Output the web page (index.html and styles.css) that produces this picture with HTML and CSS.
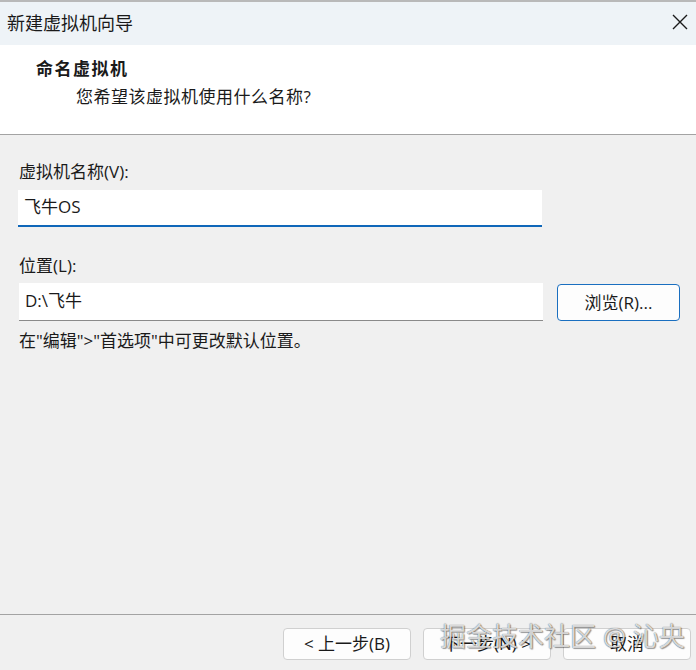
FILE: index.html
```html
<!DOCTYPE html>
<html lang="zh-CN">
<head>
    <meta charset="UTF-8">
    <meta name="viewport" content="width=device-width, initial-scale=1.0">
    <title>新建虚拟机向导</title>
    <link rel="stylesheet" href="styles.css">
</head>
<body>
    <div class="window">
        <div class="titlebar">
            <span class="title">新建虚拟机向导</span>
            <svg class="close" width="16" height="16" viewBox="0 0 16 16">
                <path d="M1 1 L15 15 M15 1 L1 15" stroke="#1a1a1a" stroke-width="1.4" fill="none"/>
            </svg>
        </div>

        <div class="header">
            <div class="heading">命名虚拟机</div>
            <div class="subheading">您希望该虚拟机使用什么名称?</div>
        </div>

        <div class="content">
            <label class="label">虚拟机名称(V):</label>
            <div class="field active">飞牛OS</div>

            <label class="label second">位置(L):</label>
            <div class="row">
                <div class="field">D:\飞牛</div>
                <button class="btn primary">浏览(R)...</button>
            </div>
            <p class="hint">在"编辑"&gt;"首选项"中可更改默认位置。</p>
        </div>

        <div class="footer">
            <button class="btn">&lt; 上一步(B)</button>
            <button class="btn">下一步(N) &gt;</button>
            <button class="btn">取消</button>
            <span class="watermark">掘金技术社区 @ 沁央</span>
        </div>
    </div>
</body>
</html>
```

FILE: styles.css
```css
* {
    box-sizing: border-box;
}
html, body {
    margin: 0;
    padding: 0;
}
body {
    font-family: "Open Sans", "Noto Sans CJK SC", sans-serif;
    font-size: 17px;
    color: #1a1a1a;
    background: #f0f0f0;
}
.window {
    position: relative;
    width: 696px;
    height: 670px;
    display: flex;
    flex-direction: column;
    overflow: hidden;
}
.titlebar {
    height: 45px;
    border-top: 2px solid #b9b9b9;
    background: #eef3f7;
    display: flex;
    align-items: center;
    justify-content: space-between;
    padding: 0 8px 0 7px;
}
.title {
    font-size: 18px;
    line-height: 24px;
    margin-top: -2px;
}
.close {
    margin-top: -4px;
}
.header {
    height: 90px;
    background: #fff;
    border-bottom: 1px solid #a3a3a3;
    padding: 12px 0 0 36px;
}
.heading {
    font-weight: 700;
    font-size: 17px;
    line-height: 24px;
    letter-spacing: 1.5px;
}
.subheading {
    margin: 4px 0 0 40px;
    line-height: 24px;
    letter-spacing: 0.5px;
}
.content {
    flex: 1;
    display: flex;
    flex-direction: column;
    padding: 25px 0 0 18px;
}
.label {
    line-height: 24px;
    padding-left: 1px;
}
.label.second {
    margin-top: 27px;
}
.field {
    width: 524px;
    height: 37px;
    margin-top: 6px;
    background: #fff;
    border-bottom: 1px solid #8a8a8a;
    padding: 0 6px;
    line-height: 34px;
}
.field.active {
    border-bottom: 2px solid #0f67b9;
}
.row {
    display: flex;
    align-items: flex-start;
    gap: 14px;
}
.row .field {
    width: 524px;
    height: 38px;
    margin-top: 5px;
    margin-left: 1px;
    line-height: 36px;
}
.btn {
    font-family: inherit;
    font-size: 17px;
    color: #1a1a1a;
    background: #fdfdfd;
    border: 1px solid #d0d0d0;
    border-radius: 4px;
    width: 128px;
    height: 32px;
    padding: 0;
    line-height: 30px;
}
.btn.primary {
    width: 123px;
    height: 37px;
    margin-top: 6px;
    border-color: #1a6fc0;
}
.hint {
    margin: 8px 0 0 1px;
    line-height: 24px;
}
.footer {
    position: relative;
    height: 56px;
    border-top: 1px solid #a3a3a3;
    display: flex;
    justify-content: flex-end;
    align-items: flex-start;
    gap: 12px;
    padding: 13px 5px 0 0;
}
.watermark {
    position: absolute;
    left: 440px;
    top: 3px;
    font-size: 26px;
    line-height: 36px;
    color: rgba(255, 255, 255, 0.8);
    text-shadow: 0 0 1px rgba(0, 0, 0, 0.7), 1px 1px 1px rgba(0, 0, 0, 0.35);
    pointer-events: none;
}
```
